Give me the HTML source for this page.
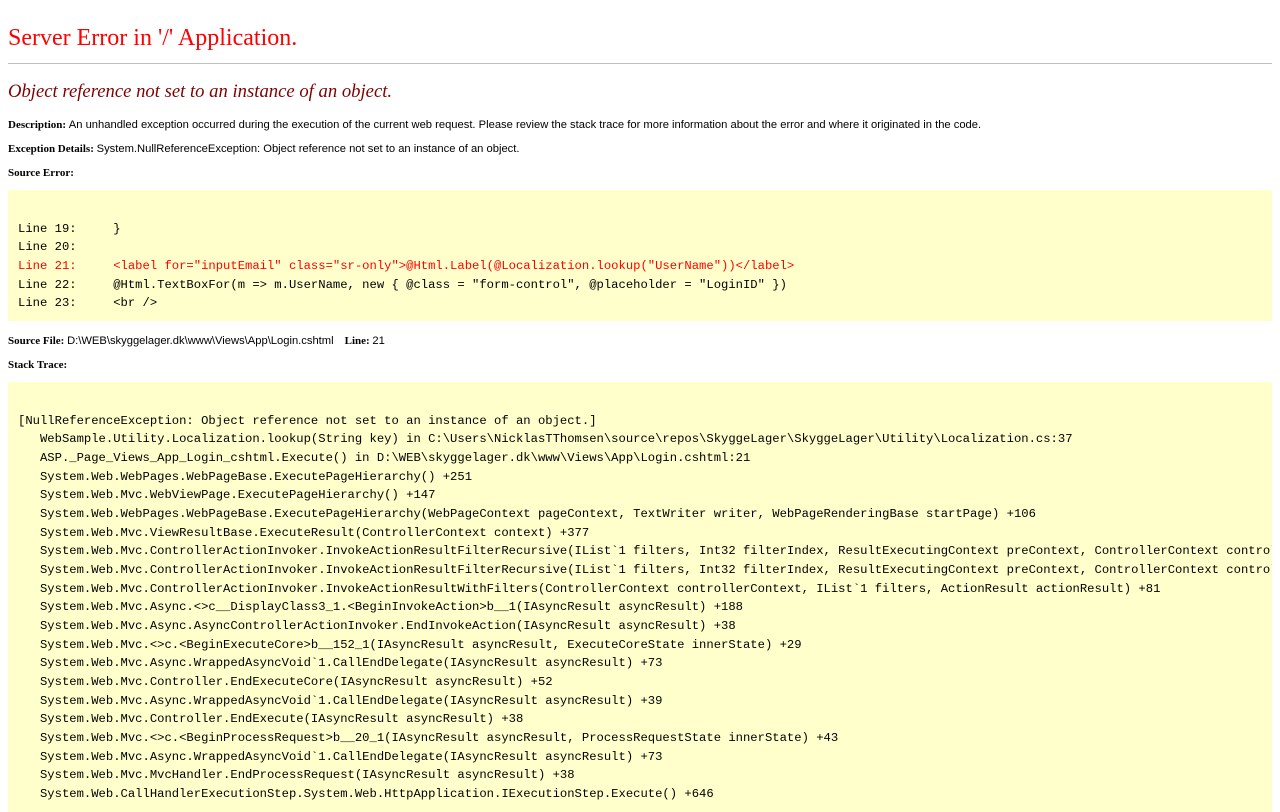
<!DOCTYPE html>
<html><head><meta charset="utf-8"><style>
body{margin:0;background:#fff;width:1280px;height:800px;overflow:hidden;position:relative;font-family:"Liberation Serif",serif;}
.a{position:absolute;left:8px;white-space:nowrap;}
h1{margin:0;font-weight:normal;font-size:24px;color:red;}
h2{margin:0;font-weight:normal;font-style:italic;font-size:18.67px;color:maroon;}
.t{font-size:11px;color:#000;}
.t b{font-family:"Liberation Serif",serif;font-size:11px;}
.t span{font-family:"Liberation Sans",sans-serif;font-size:11.2px;}
.box{position:absolute;left:8px;width:1264px;background:#ffffcc;overflow:hidden;}
pre{margin:0;padding:11px 10px 10px;font-family:"Liberation Mono",monospace;font-size:12.21px;line-height:18.67px;color:#000;letter-spacing:0;}
.r{color:red;}
</style></head><body>
<div class="a" style="top:25px"><h1>Server Error in '/' Application.</h1></div>
<div style="position:absolute;left:8px;top:63px;width:1264px;height:1px;background:#c0c0c0"></div>
<div class="a" style="top:81px"><h2>Object reference not set to an instance of an object.</h2></div>
<div class="a t" style="top:119px"><b>Description:</b> <span>An unhandled exception occurred during the execution of the current web request. Please review the stack trace for more information about the error and where it originated in the code.</span></div>
<div class="a t" style="top:143px"><b>Exception Details:</b> <span>System.NullReferenceException: Object reference not set to an instance of an object.</span></div>
<div class="a t" style="top:167px"><b>Source Error:</b></div>
<div class="box" style="top:190px;height:131px"><pre>

Line 19:     }
Line 20:
<span class="r">Line 21:     &lt;label for="inputEmail" class="sr-only"&gt;@Html.Label(@Localization.lookup("UserName"))&lt;/label&gt;</span>
Line 22:     @Html.TextBoxFor(m =&gt; m.UserName, new { @class = "form-control", @placeholder = "LoginID" })
Line 23:     &lt;br /&gt;</pre></div>
<div class="a t" style="top:335px"><b>Source File:</b> <span>D:\WEB\skyggelager.dk\www\Views\App\Login.cshtml</span> &nbsp;&nbsp; <b>Line:</b> <span>21</span></div>
<div class="a t" style="top:359px"><b>Stack Trace:</b></div>
<div class="box" style="top:382px;height:430px"><pre>

[NullReferenceException: Object reference not set to an instance of an object.]
   WebSample.Utility.Localization.lookup(String key) in C:\Users\NicklasTThomsen\source\repos\SkyggeLager\SkyggeLager\Utility\Localization.cs:37
   ASP._Page_Views_App_Login_cshtml.Execute() in D:\WEB\skyggelager.dk\www\Views\App\Login.cshtml:21
   System.Web.WebPages.WebPageBase.ExecutePageHierarchy() +251
   System.Web.Mvc.WebViewPage.ExecutePageHierarchy() +147
   System.Web.WebPages.WebPageBase.ExecutePageHierarchy(WebPageContext pageContext, TextWriter writer, WebPageRenderingBase startPage) +106
   System.Web.Mvc.ViewResultBase.ExecuteResult(ControllerContext context) +377
   System.Web.Mvc.ControllerActionInvoker.InvokeActionResultFilterRecursive(IList`1 filters, Int32 filterIndex, ResultExecutingContext preContext, ControllerContext controllerContext, ActionResult actionResult) +90
   System.Web.Mvc.ControllerActionInvoker.InvokeActionResultFilterRecursive(IList`1 filters, Int32 filterIndex, ResultExecutingContext preContext, ControllerContext controllerContext, ActionResult actionResult) +90
   System.Web.Mvc.ControllerActionInvoker.InvokeActionResultWithFilters(ControllerContext controllerContext, IList`1 filters, ActionResult actionResult) +81
   System.Web.Mvc.Async.&lt;&gt;c__DisplayClass3_1.&lt;BeginInvokeAction&gt;b__1(IAsyncResult asyncResult) +188
   System.Web.Mvc.Async.AsyncControllerActionInvoker.EndInvokeAction(IAsyncResult asyncResult) +38
   System.Web.Mvc.&lt;&gt;c.&lt;BeginExecuteCore&gt;b__152_1(IAsyncResult asyncResult, ExecuteCoreState innerState) +29
   System.Web.Mvc.Async.WrappedAsyncVoid`1.CallEndDelegate(IAsyncResult asyncResult) +73
   System.Web.Mvc.Controller.EndExecuteCore(IAsyncResult asyncResult) +52
   System.Web.Mvc.Async.WrappedAsyncVoid`1.CallEndDelegate(IAsyncResult asyncResult) +39
   System.Web.Mvc.Controller.EndExecute(IAsyncResult asyncResult) +38
   System.Web.Mvc.&lt;&gt;c.&lt;BeginProcessRequest&gt;b__20_1(IAsyncResult asyncResult, ProcessRequestState innerState) +43
   System.Web.Mvc.Async.WrappedAsyncVoid`1.CallEndDelegate(IAsyncResult asyncResult) +73
   System.Web.Mvc.MvcHandler.EndProcessRequest(IAsyncResult asyncResult) +38
   System.Web.CallHandlerExecutionStep.System.Web.HttpApplication.IExecutionStep.Execute() +646</pre></div>
</body></html>
